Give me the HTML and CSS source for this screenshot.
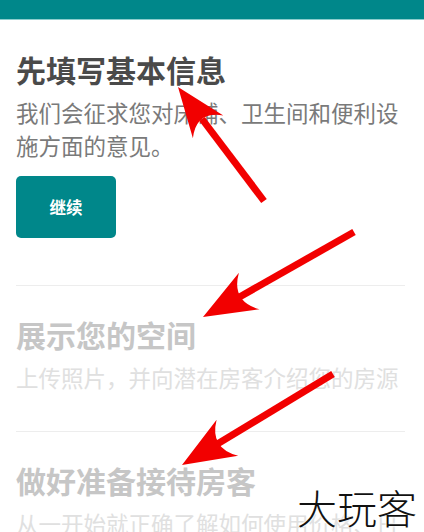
FILE: index.html
```html
<!DOCTYPE html>
<html lang="zh-CN">

<head>
    <meta charset="UTF-8" />
    <meta name="viewport" content="width=device-width, initial-scale=1.0" />
    <title>发布房源</title>
    <link rel="stylesheet" href="styles.css">
</head>

<body>
    <div class="topbar"></div>

    <main class="steps">
        <section class="step">
            <h2 class="step-title">先填写基本信息</h2>
            <p class="step-desc">我们会征求您对床铺、卫生间和便利设施方面的意见。</p>
            <button class="btn-next">继续</button>
        </section>

        <section class="step step-locked">
            <h2 class="step-title">展示您的空间</h2>
            <p class="step-desc">上传照片，并向潜在房客介绍您的房源</p>
        </section>

        <section class="step step-locked">
            <h2 class="step-title">做好准备接待房客</h2>
            <p class="step-desc">从一开始就正确了解如何使用价格、日历和预订设置</p>
        </section>
    </main>

    <!-- 标注箭头 -->
    <svg class="marks" width="424" height="532" viewBox="0 0 424 532">
        <g stroke="#f20000" stroke-width="7" fill="none">
            <line x1="264" y1="201" x2="202" y2="119" />
            <line x1="354" y1="232" x2="236" y2="299" />
            <line x1="333" y1="374" x2="214" y2="446" />
        </g>
        <g fill="#f20000">
            <path d="M178 87 L192.9 138.3 Q196.1 110.9 223.3 115.5 Z" />
            <path d="M203 317 L238.9 272.7 Q230.9 301.3 259.5 309.3 Z" />
            <path d="M182 465 L216.6 419.7 Q209.4 448.5 238.2 455.7 Z" />
        </g>
    </svg>

    <div class="watermark">大玩客</div>
</body>

</html>
```

FILE: styles.css
```css
html,
body {
    overflow: hidden;
}

body {
    margin: 0;
    width: 424px;
    height: 532px;
    position: relative;
    background: #fff;
    font-family: "Noto Sans CJK SC", "Noto Sans", sans-serif;
}

.topbar {
    height: 19px;
    background-color: #00878a;
    border-bottom: 1px solid #8ccdcd;
}

.steps {
    padding: 0 19px 0 16px;
}

.step {
    padding: 28px 0 37px;
    border-top: 1px solid #ededed;
}

.step:first-child {
    padding: 29px 0 47px;
    border-top: none;
}

.step-title {
    margin: 0;
    font-size: 30px;
    line-height: 40px;
    font-weight: bold;
    color: #4a4a4a;
}

.step-desc {
    margin: 7px 0 0;
    font-size: 22.5px;
    line-height: 33px;
    color: #7a7a7a;
}

.btn-next {
    display: block;
    margin-top: 14px;
    width: 100px;
    height: 62px;
    border: none;
    border-radius: 5px;
    background-color: #00878a;
    color: #fff;
    font-family: inherit;
    font-size: 16.5px;
    font-weight: bold;
    cursor: pointer;
}

.step-locked .step-title {
    color: #c6c6c6;
}

.step-locked .step-desc {
    color: #e0e0e0;
}

.marks {
    position: absolute;
    top: 0;
    left: 0;
    pointer-events: none;
}

.watermark {
    position: absolute;
    left: 297px;
    top: 484px;
    font-size: 40px;
    line-height: 46px;
    font-weight: 300;
    color: #111;
    text-shadow: 0 0 2px #fff, 0 0 2px #fff, 0 0 3px #fff;
}
```
